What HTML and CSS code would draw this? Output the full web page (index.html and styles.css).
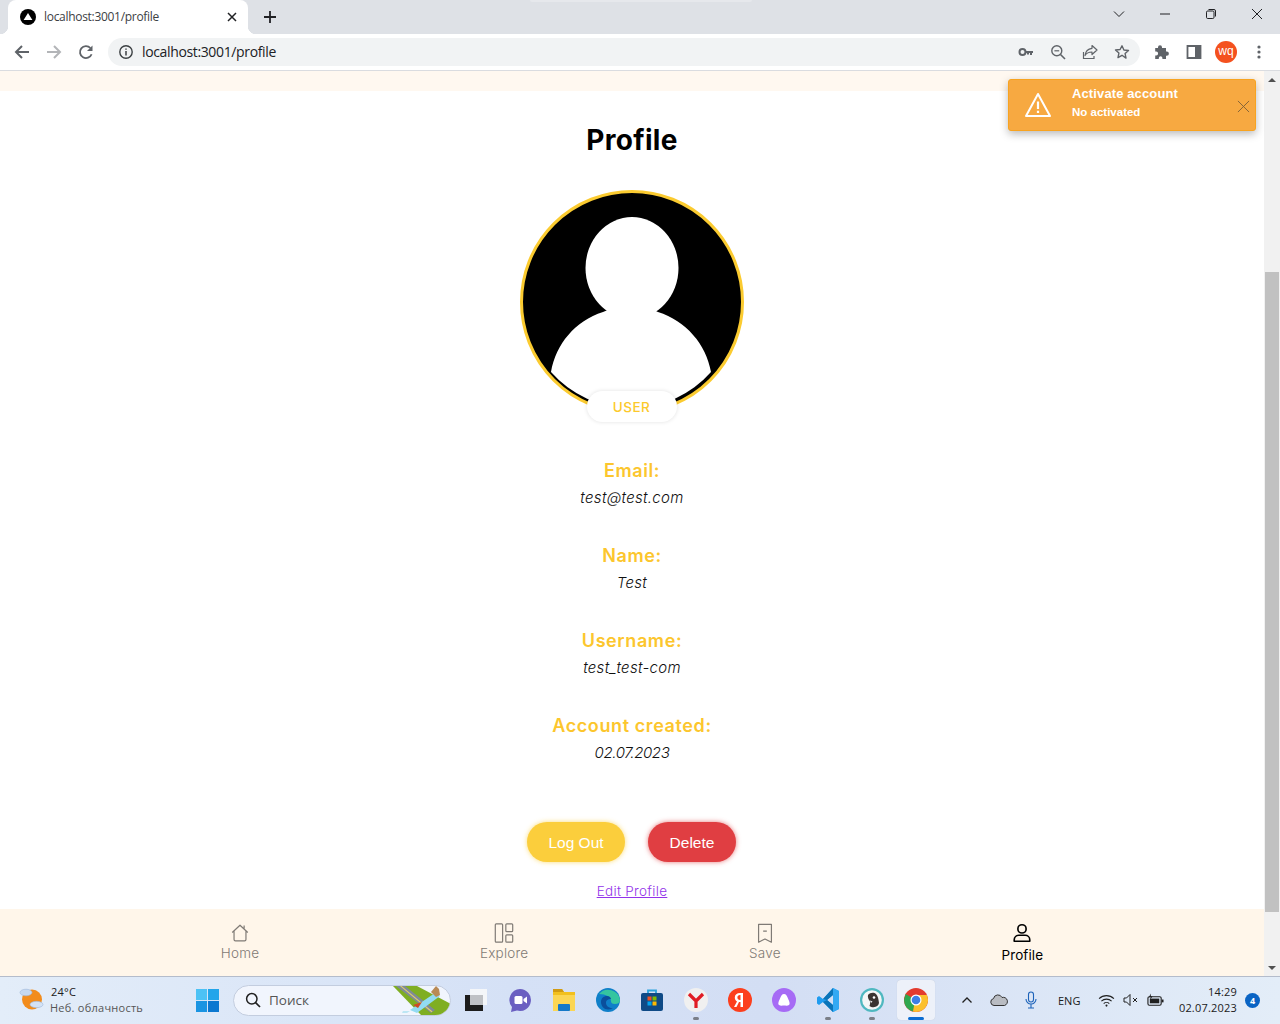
FILE: index.html
```html
<!DOCTYPE html>
<html lang="en">
<head>
<meta charset="utf-8">
<title>localhost:3001/profile</title>
<link rel="stylesheet" href="styles.css">
</head>
<body>
<div class="tabstrip">
  <div class="sliver"></div>
  <div class="tab">
    <svg class="favicon" viewBox="0 0 16 16"><circle cx="8" cy="8" r="8" fill="#000"/><path d="M8 4l4.4 7H3.6z" fill="#fff"/></svg>
    <span class="tab-title">localhost:3001/profile</span>
    <svg class="tab-close" viewBox="0 0 10 10"><path d="M1 1l8 8M9 1l-8 8" stroke="#202124" stroke-width="1.5"/></svg>
  </div>
  <div class="newtab"><svg viewBox="0 0 12 12" class="i12"><path d="M6 0v12M0 6h12" stroke="#202124" stroke-width="1.8"/></svg></div>
  <div class="winctl">
    <div class="wbtn"><svg class="i12" viewBox="0 0 12 12"><path d="M1 3.5l5 5 5-5" fill="none" stroke="#202124"/></svg></div>
    <div class="wbtn"><svg class="i12" viewBox="0 0 12 12"><path d="M1 6h10" stroke="#202124"/></svg></div>
    <div class="wbtn"><svg class="i12" viewBox="0 0 12 12"><rect x="1.5" y="3" width="7.5" height="7.5" rx="1.2" fill="none" stroke="#202124"/><path d="M3.5 1.5h5.5a1.5 1.5 0 0 1 1.5 1.5v5.5" fill="none" stroke="#202124"/></svg></div>
    <div class="wbtn"><svg class="i12" viewBox="0 0 12 12"><path d="M1 1l10 10M11 1L1 11" stroke="#202124"/></svg></div>
  </div>
</div>
<div class="toolbar">
  <div class="tbtn"><svg class="i16" viewBox="0 0 16 16"><path d="M15 8H2M8 2L2 8l6 6" fill="none" stroke="#5f6368" stroke-width="2"/></svg></div>
  <div class="tbtn"><svg class="i16" viewBox="0 0 16 16"><path d="M1 8h13M8 2l6 6-6 6" fill="none" stroke="#b3b5b8" stroke-width="2"/></svg></div>
  <div class="tbtn"><svg class="i16" viewBox="0 0 16 16"><path d="M13.6 10.2A6 6 0 1 1 12.4 4" fill="none" stroke="#5f6368" stroke-width="1.8"/><path d="M14.5 1.5v5.5H9z" fill="#5f6368"/></svg></div>
  <div class="omnibox">
    <svg class="i16 info" viewBox="0 0 16 16"><circle cx="8" cy="8" r="6.2" fill="none" stroke="#3c4043" stroke-width="1.4"/><path d="M8 7v4.4M8 4.4v1.4" stroke="#3c4043" stroke-width="1.5"/></svg>
    <span class="url">localhost:3001/profile</span>
    <div class="omni-actions">
      <div class="tbtn"><svg class="i16" viewBox="0 0 16 16"><circle cx="4.5" cy="8" r="3" fill="none" stroke="#5f6368" stroke-width="2"/><path d="M7.5 7h7.5v2h-1v2h-2V9h-1v1.5H9V9H7.5z" fill="#5f6368"/></svg></div>
      <div class="tbtn"><svg class="i16" viewBox="0 0 16 16"><circle cx="6.8" cy="6.8" r="5" fill="none" stroke="#5f6368" stroke-width="1.4"/><path d="M10.5 10.5L15 15" stroke="#5f6368" stroke-width="1.6"/><path d="M4.4 6.8h4.8" stroke="#5f6368" stroke-width="1.2"/></svg></div>
      <div class="tbtn"><svg class="i16" viewBox="0 0 16 16"><path d="M10 1.500l5 4.500-5 4.500V8C6.500 8 4.500 9 3 11.500 3.500 7.500 6 4.800 10 4.300z" fill="none" stroke="#5f6368" stroke-width="1.2" stroke-linejoin="round"/><path d="M1.500 8v6.500h10.500V12" fill="none" stroke="#5f6368" stroke-width="1.2"/></svg></div>
      <div class="tbtn"><svg class="i16" viewBox="0 0 16 16"><path d="M8 1.800l1.900 4.200 4.600.5-3.400 3.100.9 4.500L8 11.300l-4 2.300.9-4.500-3.400-3.100 4.600-.5z" fill="none" stroke="#5f6368" stroke-width="1.4" stroke-linejoin="round"/></svg></div>
    </div>
  </div>
  <div class="tbtn ext"><svg class="i16" viewBox="0 0 16 16"><path d="M6 1.200a2 2 0 0 1 2 2V4h4v3.600h.8a2.100 2.100 0 0 1 0 4.200H12V15H8.400v-1a1.800 1.800 0 0 0-3.600 0v1H1.200v-3.600h1a1.900 1.900 0 0 0 0-3.800h-1V4H4v-.8a2 2 0 0 1 2-2z" fill="#5f6368"/></svg></div>
  <div class="tbtn"><svg class="i16" viewBox="0 0 16 16"><path d="M1.500 2h13v12h-13z" fill="#fff" stroke="#5f6368" stroke-width="1.8"/><rect x="9" y="2" width="6" height="12" fill="#5f6368"/></svg></div>
  <div class="tbtn"><span class="acct">wq</span></div>
  <div class="tbtn dots"><svg class="i16" viewBox="0 0 16 16"><circle cx="8" cy="3" r="1.600" fill="#5f6368"/><circle cx="8" cy="8" r="1.600" fill="#5f6368"/><circle cx="8" cy="13" r="1.600" fill="#5f6368"/></svg></div>
</div>

<div class="viewport">
  <div class="page">
    <div class="topstrip"></div>
    <main class="content">
      <h1 class="title">Profile</h1>
      <div class="avatar">
        <svg class="avatar-img" viewBox="0 0 224 224">
          <circle cx="112" cy="112" r="110.500" fill="#000" stroke="#fbcb30" stroke-width="3"/>
          <ellipse cx="112" cy="78" rx="46.500" ry="51" fill="#fff"/>
          <path d="M83 122C55 131 36 154 31 182A106.500 106.500 0 0 0 191 182C186 154 166 131 138 122L112 110z" fill="#fff"/>
        </svg>
        <span class="role">USER</span>
      </div>
      <section class="field first"><h2>Email:</h2><p>test@test.com</p></section>
      <section class="field"><h2>Name:</h2><p>Test</p></section>
      <section class="field"><h2>Username:</h2><p>test_test-com</p></section>
      <section class="field"><h2>Account created:</h2><p class="date">02.07.2023</p></section>
      <div class="actions">
        <button class="btn logout">Log Out</button>
        <button class="btn delete">Delete</button>
      </div>
      <a class="edit" href="#">Edit Profile</a>
    </main>
    <nav class="nav">
      <div class="nav-item">
        <svg class="nav-ico" viewBox="0 0 24 24"><path d="M3.500 11.500L12 3.500l8.500 8M5.500 10v9a1.500 1.500 0 0 0 1.500 1.500h10a1.500 1.500 0 0 0 1.500-1.500v-9M16.500 7V3.800" fill="none" stroke="currentColor" stroke-width="1.300" stroke-linejoin="round"/></svg>
        <span>Home</span>
      </div>
      <div class="nav-item">
        <svg class="nav-ico" viewBox="0 0 24 24"><rect x="2.500" y="2" width="8" height="20" rx="1" fill="none" stroke="currentColor" stroke-width="1.300"/><rect x="14" y="2" width="7.500" height="8.500" rx="1" fill="none" stroke="currentColor" stroke-width="1.300"/><rect x="14" y="14" width="7.500" height="8" rx="1" fill="none" stroke="currentColor" stroke-width="1.300"/></svg>
        <span>Explore</span>
      </div>
      <div class="nav-item">
        <svg class="nav-ico" viewBox="0 0 24 24"><path d="M5 2.500h14v19.500l-7-3.500-7 3.500zM10 10h4" fill="none" stroke="currentColor" stroke-width="1.300" stroke-linejoin="round"/></svg>
        <span>Save</span>
      </div>
      <div class="nav-item active">
        <svg class="nav-ico" viewBox="0 0 24 24"><circle cx="12" cy="7.500" r="4.500" fill="none" stroke="currentColor" stroke-width="1.800"/><path d="M3.500 21v-1.500c0-3 2.500-5 5-5h7c2.500 0 5 2 5 5V21z" fill="none" stroke="currentColor" stroke-width="1.800" stroke-linejoin="round"/></svg>
        <span>Profile</span>
      </div>
    </nav>
  </div>
  <div class="scrollbar">
    <div class="arrow up"></div>
    <div class="track"><div class="thumb"></div></div>
    <div class="arrow down"></div>
  </div>
  <div class="toast">
    <svg class="toast-ico" viewBox="0 0 26 26"><path d="M13 2L25 24H1z" fill="none" stroke="#fff" stroke-width="2" stroke-linejoin="round"/><path d="M13 9.500v7.500M13 18.800v2.200" stroke="#fff" stroke-width="2.200"/></svg>
    <div class="toast-text"><strong>Activate account</strong><span>No activated</span></div>
    <svg class="toast-x" viewBox="0 0 14 14"><path d="M1 1l12 12M13 1L1 13" stroke="#7d6038" stroke-width="1"/></svg>
  </div>
</div>

<footer class="taskbar">
  <div class="weather">
    <svg class="weather-ico" viewBox="0 0 26 26"><circle cx="13" cy="12.500" r="10" fill="#f28c1c"/><ellipse cx="7" cy="5.500" rx="6" ry="3.300" fill="#c6d8ef" stroke="#9db7da" stroke-width=".6"/><ellipse cx="17.500" cy="17.500" rx="6.500" ry="3.200" fill="#d3e2f5" stroke="#9db7da" stroke-width=".6"/></svg>
    <div class="weather-text"><span class="temp">24°C</span><span class="cond">Неб. облачность</span></div>
  </div>
  <svg class="start" viewBox="0 0 24 24"><rect width="11.500" height="11.500" fill="#4cc2f5"/><rect x="12.500" width="11.500" height="11.500" fill="#22a5ea"/><rect y="12.500" width="11.500" height="11.500" fill="#1a94e2"/><rect x="12.500" y="12.500" width="11.500" height="11.500" fill="#0c78d0"/></svg>
  <div class="search">
    <svg class="search-ico" viewBox="0 0 16 16"><circle cx="6.800" cy="6.800" r="5.200" fill="none" stroke="#202020" stroke-width="1.500"/><path d="M10.600 10.600L15 15" stroke="#202020" stroke-width="1.700"/></svg>
    <span class="search-text">Поиск</span>
    <svg class="search-art" viewBox="0 0 58 30"><path d="M0 1h24l34 18v8l-8 3H28z" fill="#7fae22"/><path d="M3 1h9l30 24-4 3z" fill="#7f8a98"/><path d="M7 1h1.500l31 25.500-1 .7z" fill="#e5cf6a"/><path d="M17 25l25-17 5 3-23 17z" fill="#92dbf2"/><path d="M20 20l9-3-4 6z" fill="#cf4a28"/><path d="M38 7l5-6 3 3 1 6-4 2z" fill="#b98a55"/><path d="M10 26h7l-3 2h-5z" fill="#bde6f4"/></svg>
  </div>
  <div class="apps">
    <div class="app"><svg class="i24" viewBox="0 0 24 24"><rect x="7" y="1" width="17" height="16" fill="#f4f6f9"/><rect x="2" y="7" width="18" height="16" fill="#1c1c1c"/><rect x="7" y="7" width="13" height="10" fill="#bfc1c5"/></svg></div>
    <div class="app"><svg class="i24" viewBox="0 0 24 24"><path d="M12 1a11 11 0 1 1-3 21.600L3 24l1-5A11 11 0 0 1 12 1z" fill="#6a5fc1"/><rect x="6.500" y="8" width="8" height="8" rx="1.500" fill="#fff"/><path d="M15.500 11l3.500-2.500v7L15.500 13z" fill="#fff"/></svg></div>
    <div class="app"><svg class="i24" viewBox="0 0 24 24"><path d="M1 1h9l2 3h11v19H1z" fill="#f2c01e"/><path d="M1 1h9l2 3H1z" fill="#d19b13"/><path d="M1 7h22v16H1z" fill="#fbd654"/><rect x="6" y="16" width="12" height="7" rx="1" fill="#1478c8"/></svg></div>
    <div class="app"><svg class="i24" viewBox="0 0 24 24"><circle cx="12" cy="12" r="12" fill="#0f7fc9"/><path d="M3 6a12 12 0 0 1 21 6c0 2.500-2 4-5 4-3 0-4-1-4-3 0-4-5-7-12-7z" fill="#35c5a0"/><path d="M5 14c0-4 3-6 6-6 2.500 0 4 1.500 4 3-3 0-5 1-5 4s3 5 7 5.500a12 12 0 0 1-5 1C8 21.500 5 18 5 14z" fill="#0b4f9c"/></svg></div>
    <div class="app"><svg class="i24" viewBox="0 0 24 24"><path d="M8 6V2.500h8V6" fill="none" stroke="#2aa3dd" stroke-width="1.800"/><rect x="1" y="5" width="22" height="18" rx="2" fill="#0f4a86"/><rect x="7.500" y="8.500" width="4" height="4" fill="#f25022"/><rect x="12.500" y="8.500" width="4" height="4" fill="#7fba00"/><rect x="7.500" y="13.500" width="4" height="4" fill="#00a4ef"/><rect x="12.500" y="13.500" width="4" height="4" fill="#ffb900"/></svg></div>
    <div class="app open"><svg class="i24" viewBox="0 0 24 24"><circle cx="12" cy="12" r="12" fill="#f0f0f0"/><path d="M5 6l7 7v7M19 6l-7 7" fill="none" stroke="#e01c24" stroke-width="3.200"/></svg></div>
    <div class="app"><svg class="i24" viewBox="0 0 24 24"><circle cx="12" cy="12" r="12" fill="#fc3f1d"/><path d="M15 5v14h-2.500v-5H11L8.500 19H6l3-5.600C7.500 12.500 6.800 11.300 6.800 9.500 6.800 6.500 9 5 12 5zM12.500 7H12c-1.600 0-2.600 1-2.600 2.500s1 2.500 2.600 2.500h.5z" fill="#fff"/></svg></div>
    <div class="app"><svg class="i24" viewBox="0 0 24 24"><circle cx="12" cy="12" r="12" fill="#a66bf5"/><path d="M12 6c2 0 3 2 4 4.500s2.500 5 1 6.500c-1.500 1-3.500.5-5 .5s-3.500.5-5-.5c-1.500-1.500 0-4 1-6.500S10 6 12 6z" fill="#fff"/></svg></div>
    <div class="app open"><svg class="i24" viewBox="0 0 24 24"><path d="M17 0l6 3v18l-6 3-10-10-4 3-2-1.500V9.500L3 8l4 3zM17 7l-6 5 6 5z" fill="#1f9cf0"/><path d="M17 0l6 3v18l-6 3z" fill="#33a9f3"/><path d="M17 0v7l-6 5-4-1zM17 24v-7l-6-5-4 2z" fill="#0b74b8"/></svg></div>
    <div class="app open"><svg class="i24" viewBox="0 0 24 24"><circle cx="12" cy="12" r="12" fill="#4fb8c0"/><circle cx="12" cy="12" r="9.800" fill="#f4f6f6"/><path d="M8 7c2-2.500 6-3 8-1 2 2 2.500 5 3 9-.5 2.500-2.500 4-5.500 4.300-1.500 0-3-.3-4-1.300 .8-2 .8-4 .3-5C8.500 11.500 7.500 9 8 7z" fill="#3a3330"/><circle cx="14" cy="9.500" r="1.300" fill="#fff"/><path d="M10 12.500l2.500 1-1.500 1.500z" fill="#f4f6f6"/></svg></div>
    <div class="app active"><svg class="i24" viewBox="0 0 24 24"><circle cx="12" cy="12" r="12" fill="#e33b2e"/><path d="M12 12L1.600 6 0 12a12 12 0 0 0 9 11.600z" fill="#2fa84f"/><path d="M12 7h10.900A12 12 0 0 1 12 24l-3-.4z" fill="#fbc02d"/><circle cx="12" cy="12" r="5.500" fill="#fff"/><circle cx="12" cy="12" r="4.300" fill="#3d7fe6"/></svg></div>
  </div>
  <div class="tray">
    <svg class="tray-ico chev" viewBox="0 0 12 12"><path d="M1.500 8.500L6 4l4.500 4.500" fill="none" stroke="#202020" stroke-width="1.300"/></svg>
    <svg class="tray-ico cloud" viewBox="0 0 18 12"><path d="M4 11.500a3.500 3.500 0 0 1-.5-6.900A4.500 4.500 0 0 1 12 3.500a3.800 3.800 0 0 1 2.500 8z" fill="#b9bcc2" stroke="#333" stroke-width="1"/></svg>
    <svg class="tray-ico mic" viewBox="0 0 12 18"><rect x="3.500" y="1" width="5" height="10" rx="2.500" fill="none" stroke="#1c62b9" stroke-width="1.100"/><path d="M1 8a5 5 0 0 0 10 0M6 13v4M3 17h6" fill="none" stroke="#1c62b9" stroke-width="1.100"/></svg>
    <span class="lang">ENG</span>
    <svg class="tray-ico wifi" viewBox="0 0 18 14"><path d="M1 5a11.500 11.500 0 0 1 16 0M3.500 7.700a8 8 0 0 1 11 0M6 10.300a4.300 4.300 0 0 1 6 0" fill="none" stroke="#202020" stroke-width="1.100"/><circle cx="9" cy="12.500" r="1.100" fill="#202020"/></svg>
    <svg class="tray-ico mute" viewBox="0 0 16 14"><path d="M1 5v4h2.500L7 12.500v-11L3.500 5z" fill="none" stroke="#202020" stroke-width="1"/><path d="M10 5l4 4M14 5l-4 4" stroke="#202020" stroke-width="1"/></svg>
    <svg class="tray-ico batt" viewBox="0 0 18 14"><rect x="1" y="3.500" width="14" height="9" rx="1.500" fill="none" stroke="#202020" stroke-width="1.200"/><rect x="3" y="5.500" width="10" height="5" fill="#202020"/><rect x="15.500" y="6.500" width="2" height="3" fill="#202020"/><path d="M4 0L2 4h2l-1 3 3-4H4z" fill="#202020"/></svg>
    <div class="clock"><span>14:29</span><span>02.07.2023</span></div>
    <span class="badge">4</span>
  </div>
</footer>
</body>
</html>
```

FILE: styles.css
```css
* { box-sizing: border-box; }
html, body { margin: 0; height: 100%; }
body {
  width: 1280px;
  height: 1024px;
  overflow: hidden;
  display: flex;
  flex-direction: column;
  font-family: "Open Sans", "Noto Sans", sans-serif;
  background: #fff;
}
svg { display: block; flex: none; }
.i12 { width: 12px; height: 12px; }
.i16 { width: 16px; height: 16px; }
.i24 { width: 24px; height: 24px; }

/* browser tab strip */
.tabstrip {
  position: relative;
  height: 34px;
  flex: none;
  display: flex;
  background: #dee1e6;
}
.sliver {
  position: absolute;
  left: 530px;
  top: 0;
  width: 222px;
  height: 2px;
  background: #e6e8ec;
  border-radius: 0 0 4px 4px;
}
.tab {
  position: relative;
  width: 240px;
  margin-left: 8px;
  background: #fff;
  border-radius: 8px 8px 0 0;
  display: flex;
  align-items: center;
  padding: 0 11px 0 12px;
}
.tab::before, .tab::after {
  content: "";
  position: absolute;
  bottom: 0;
  width: 8px;
  height: 8px;
}
.tab::before { left: -8px; background: radial-gradient(circle at 0 0, transparent 8px, #fff 8.500px); }
.tab::after { right: -8px; background: radial-gradient(circle at 100% 0, transparent 8px, #fff 8.500px); }
.favicon { width: 16px; height: 16px; }
.tab-title { margin: 0 0 2px 8px; flex: 1; font-size: 12px; color: #3c4043; letter-spacing: -.3px; }
.tab-close { width: 10px; height: 10px; }
.newtab { width: 32px; margin-left: 6px; display: flex; align-items: center; justify-content: center; }
.winctl { margin-left: auto; display: flex; }
.wbtn { width: 46px; height: 28px; display: flex; align-items: center; justify-content: center; }

/* browser toolbar */
.toolbar {
  height: 37px;
  flex: none;
  display: flex;
  align-items: flex-start;
  padding: 2px 5px 0 6px;
  background: #fff;
  border-bottom: 1px solid #dadce0;
}
.tbtn { width: 32px; height: 32px; flex: none; display: flex; align-items: center; justify-content: center; }
.omnibox {
  flex: 1;
  height: 28px;
  margin: 2px 0 0 6px;
  display: flex;
  align-items: center;
  padding: 0 2px 0 10px;
  border-radius: 14px;
  background: #f1f3f4;
}
.url { margin: 0 0 2px 8px; font-size: 14px; color: #202124; letter-spacing: -.36px; }
.omni-actions { margin-left: auto; display: flex; }
.ext { margin-left: 6px; }
.dots { margin-left: 1px; }
.acct {
  width: 22px;
  height: 22px;
  border-radius: 50%;
  background: #f4511e;
  color: #fff;
  font: 12px/20px "Liberation Sans", sans-serif;
  text-align: center;
}

/* page viewport */
.viewport { position: relative; flex: 1; min-height: 0; display: flex; }
.page { flex: 1; min-width: 0; display: flex; flex-direction: column; font-family: Inter, sans-serif; }
.topstrip { height: 20px; flex: none; background: #fff8f0; }
.content { flex: 1; min-height: 0; display: flex; flex-direction: column; align-items: center; }
.title {
  margin: 32px 0 0;
  height: 35px;
  font-size: 28px;
  line-height: 35px;
  font-weight: 700;
  color: #000;
  letter-spacing: .3px;
}
.avatar { position: relative; width: 224px; height: 224px; margin: 32px 1px 0 0; }
.avatar-img { width: 224px; height: 224px; }
.role {
  position: absolute;
  left: 67px;
  top: 201px;
  width: 90px;
  height: 31px;
  border-radius: 16px;
  background: #fff;
  box-shadow: 0 0 4px rgba(0,0,0,.12);
  color: #fcc92c;
  font-size: 13.500px;
  font-weight: 500;
  line-height: 33px;
  text-align: center;
  letter-spacing: .5px;
}
.field { height: 85px; text-align: center; }
.field.first { margin-top: 45px; }
.field h2 {
  margin: 0;
  font-size: 18px;
  line-height: 24px;
  font-weight: 600;
  color: #fcc62d;
  letter-spacing: .6px;
}
.field p {
  margin: 4px 0 0;
  font-size: 15px;
  line-height: 22px;
  font-style: italic;
  font-weight: 300;
  color: #111;
  letter-spacing: .3px;
}
.field p.date { letter-spacing: -.4px; }
.actions { display: flex; gap: 23px; margin: 23px 1px 0 0; }
.btn {
  height: 40px;
  border: 0;
  border-radius: 20px;
  color: #fff;
  font: 15.500px "Liberation Sans", Arial, sans-serif;
  padding: 2px 0 0;
}
.logout { width: 98px; background: #fbce3c; box-shadow: 0 0 5px rgba(251,206,60,.7); }
.delete { width: 88px; background: #e03e42; box-shadow: 0 0 5px rgba(224,62,66,.7); }
.edit {
  margin-top: 20px;
  font-size: 13.500px;
  line-height: 18px;
  font-weight: 300;
  color: #9333ea;
  letter-spacing: .3px;
}
.nav {
  height: 67px;
  flex: none;
  display: flex;
  justify-content: space-evenly;
  background: #fff6ea;
  padding-top: 13px;
}
.nav-item {
  display: flex;
  flex-direction: column;
  align-items: center;
  color: #7f7a75;
  font-size: 13.500px;
  font-weight: 300;
  letter-spacing: .2px;
  line-height: 20px;
}
.nav-item span { margin-top: -1px; }
.nav-ico { width: 22px; height: 22px; }
.nav-item.active { color: #000; font-weight: 400; letter-spacing: .1px; }
.nav-item.active span { margin-top: 1px; }

/* scrollbar */
.scrollbar { width: 16px; flex: none; display: flex; flex-direction: column; background: #f1f1f1; }
.arrow { height: 17px; flex: none; display: flex; align-items: center; justify-content: center; }
.arrow.up::after { content: ""; border: 4px solid transparent; border-top: 0; border-bottom: 4px solid #505050; }
.arrow.down::after { content: ""; border: 4px solid transparent; border-bottom: 0; border-top: 4px solid #505050; }
.track { flex: 1; padding-top: 184px; padding-bottom: 47px; display: flex; }
.thumb { flex: 1; background: #c1c1c1; margin: 0 1px; }

/* toast */
.toast {
  position: absolute;
  left: 1008px;
  top: 8px;
  width: 248px;
  height: 52px;
  display: flex;
  align-items: center;
  padding: 0 5px 0 16px;
  background: #f7a941;
  border: 1px solid #f8a31f;
  border-radius: 3px;
  box-shadow: 0 3px 8px rgba(0,0,0,.28);
  color: #fff;
  font-family: "Liberation Sans", Arial, sans-serif;
}
.toast-ico { width: 26px; height: 26px; }
.toast-text { margin: -4px 0 0 21px; flex: 1; display: flex; flex-direction: column; gap: 3px; }
.toast-text strong { font-size: 13px; line-height: 16px; letter-spacing: .12px; }
.toast-text span { font-size: 11.500px; line-height: 15px; font-weight: 700; }
.toast-x { width: 13px; height: 13px; margin-top: 2px; }

/* taskbar */
.taskbar {
  height: 48px;
  flex: none;
  display: flex;
  align-items: center;
  padding-bottom: 1px;
  background: linear-gradient(90deg, #e3edf9 0%, #d5e1f6 40%, #d3def4 60%, #e3edf8 100%);
  border-top: 1px solid #b4bccb;
  color: #202020;
}
.weather { width: 196px; padding-left: 19px; display: flex; align-items: center; flex: none; }
.weather-ico { width: 26px; height: 26px; }
.weather-text { margin: -1px 0 0 5px; display: flex; flex-direction: column; font-size: 11px; line-height: 15.500px; }
.temp { color: #202020; margin-left: 1px; letter-spacing: .2px; }
.cond { color: #555; letter-spacing: .25px; }
.start { width: 23px; height: 23px; }
.search {
  width: 218px;
  height: 31px;
  margin-left: 14px;
  display: flex;
  align-items: center;
  padding-left: 11px;
  border-radius: 16px;
  overflow: hidden;
  background: #f1f5fd;
  border: 1px solid #c3cddf;
  flex: none;
}
.search-ico { width: 16px; height: 16px; }
.search-text { margin-left: 8px; font-size: 13.500px; color: #555; }
.search-art { width: 58px; height: 30px; margin-left: auto; margin-right: -1px; }
.apps { display: flex; margin-left: 1px; }
.app {
  position: relative;
  width: 44px;
  height: 40px;
  display: flex;
  align-items: center;
  justify-content: center;
}
.app:first-child { width: 46px; }
.app.open::after {
  content: "";
  position: absolute;
  bottom: 0;
  left: 19px;
  width: 6px;
  height: 3px;
  border-radius: 2px;
  background: #7b7f88;
}
.app.active { background: #edf1f9; border-radius: 4px; width: 38px; margin: 0 3px; box-shadow: 0 0 1px rgba(0,0,0,.15); }
.app.active::after {
  content: "";
  position: absolute;
  bottom: 0;
  left: 11px;
  width: 16px;
  height: 3px;
  border-radius: 2px;
  background: #0a6cd1;
}
.tray { display: flex; align-items: center; margin-left: 23px; flex: 1; }
.tray-ico { flex: none; }
.chev { width: 12px; height: 12px; }
.cloud { width: 18px; height: 12px; margin-left: 17px; }
.mic { width: 12px; height: 18px; margin-left: 17px; }
.lang { width: 26px; margin-left: 21px; font-size: 11px; }
.wifi { width: 17px; height: 13px; margin-left: 14px; }
.mute { width: 16px; height: 14px; margin-left: 8px; }
.batt { width: 17px; height: 14px; margin-left: 8px; }
.clock {
  width: 66px;
  margin-left: 7px;
  display: flex;
  flex-direction: column;
  align-items: flex-end;
  font-size: 11px;
  line-height: 16px;
  letter-spacing: .2px;
}
.badge {
  width: 15px;
  height: 15px;
  margin-left: 8px;
  border-radius: 50%;
  background: #0a64c4;
  color: #fff;
  font-size: 9px;
  font-weight: 700;
  line-height: 15px;
  text-align: center;
}
```
